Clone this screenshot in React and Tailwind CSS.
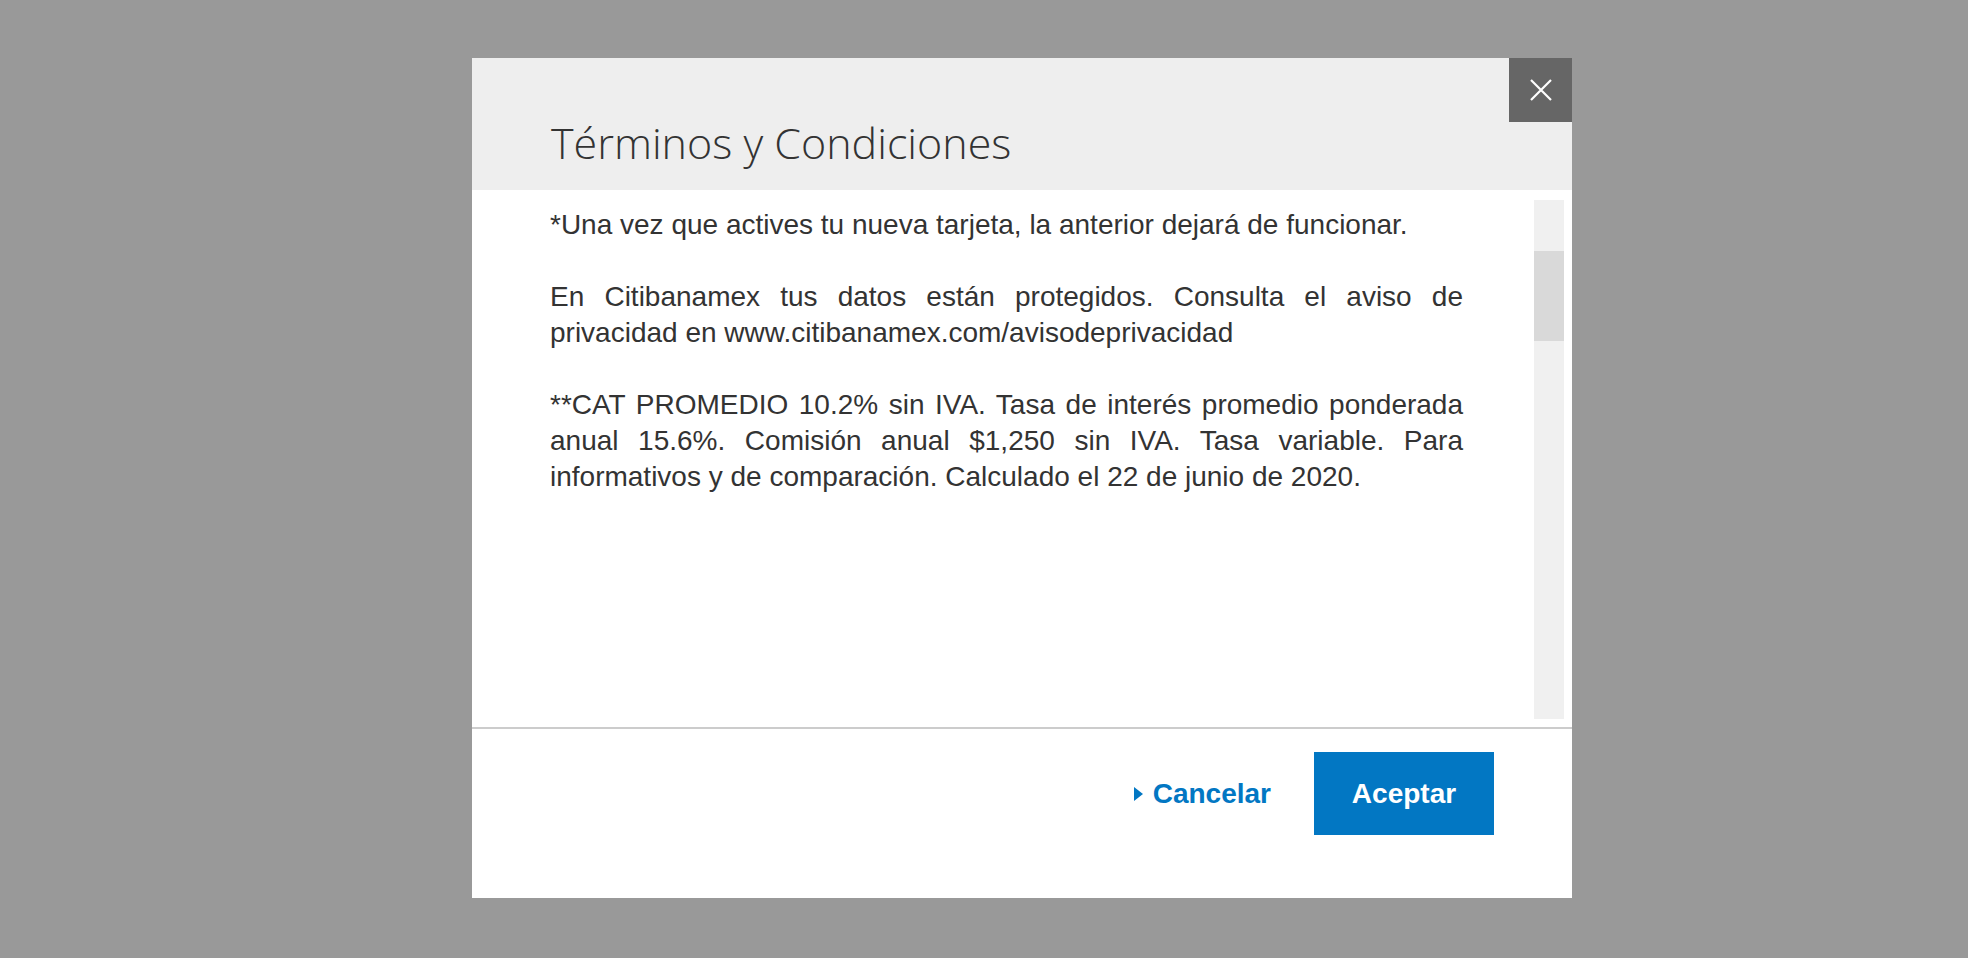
import React from 'react';

const CloseIcon = () => (
  <svg width="22" height="22" viewBox="0 0 22 22" fill="none">
    <path d="M1 1L21 21M21 1L1 21" stroke="#ffffff" strokeWidth="2.2" />
  </svg>
);

const TermsModal = () => {
  return (
    <div className="w-[1100px] h-[840px] bg-white flex flex-col">
      {/* Header */}
      <div className="relative h-[132px] bg-[#eeeeee] pl-[79px] pt-[60px] shrink-0">
        <h2 className="text-[43px] leading-[50px] font-light text-[#333333] font-['Open_Sans',sans-serif]">
          Términos y Condiciones
        </h2>
        <button className="absolute top-0 right-0 w-[63px] h-[64px] bg-[#666666] flex items-center justify-center">
          <CloseIcon />
        </button>
      </div>

      {/* Body */}
      <div className="flex h-[537px] shrink-0">
        <div className="w-[991px] pl-[78px] pt-[17px] text-[28px] leading-[36px] text-[#333333] text-justify font-['Liberation_Sans',Arial,sans-serif]">
          <p>*Una vez que actives tu nueva tarjeta, la anterior dejará de funcionar.</p>
          <p className="mt-[36px]">
            En Citibanamex tus datos están protegidos. Consulta el aviso de privacidad en www.citibanamex.com/avisodeprivacidad
          </p>
          <p className="mt-[36px]">
            **CAT PROMEDIO 10.2% sin IVA. Tasa de interés promedio ponderada anual 15.6%. Comisión anual $1,250 sin IVA. Tasa variable. Para informativos y de comparación. Calculado el 22 de junio de 2020.
          </p>
        </div>
        <div className="ml-auto mr-[8px] mt-[10px] mb-[8px] w-[30px] bg-[#f0f0f0]">
          <div className="mt-[51px] h-[90px] bg-[#d9d9d9]" />
        </div>
      </div>

      <div className="h-[2px] bg-[#cccccc] shrink-0" />

      {/* Footer */}
      <div className="flex justify-end items-start pt-[23px] pr-[78px] font-['Liberation_Sans',Arial,sans-serif]">
        <button className="flex items-center gap-[10px] h-[83px] mr-[43px] text-[28px] font-bold text-[#0277c3]">
          <span className="w-0 h-0 border-y-[7px] border-y-transparent border-l-[9px] border-l-[#0277c3]" />
          Cancelar
        </button>
        <button className="w-[180px] h-[83px] bg-[#0277c3] text-white text-[28px] font-bold">
          Aceptar
        </button>
      </div>
    </div>
  );
};

export default function App() {
  return (
    <div className="w-full h-[958px] bg-[#999999] pl-[472px] pt-[58px]">
      <TermsModal />
    </div>
  );
}
